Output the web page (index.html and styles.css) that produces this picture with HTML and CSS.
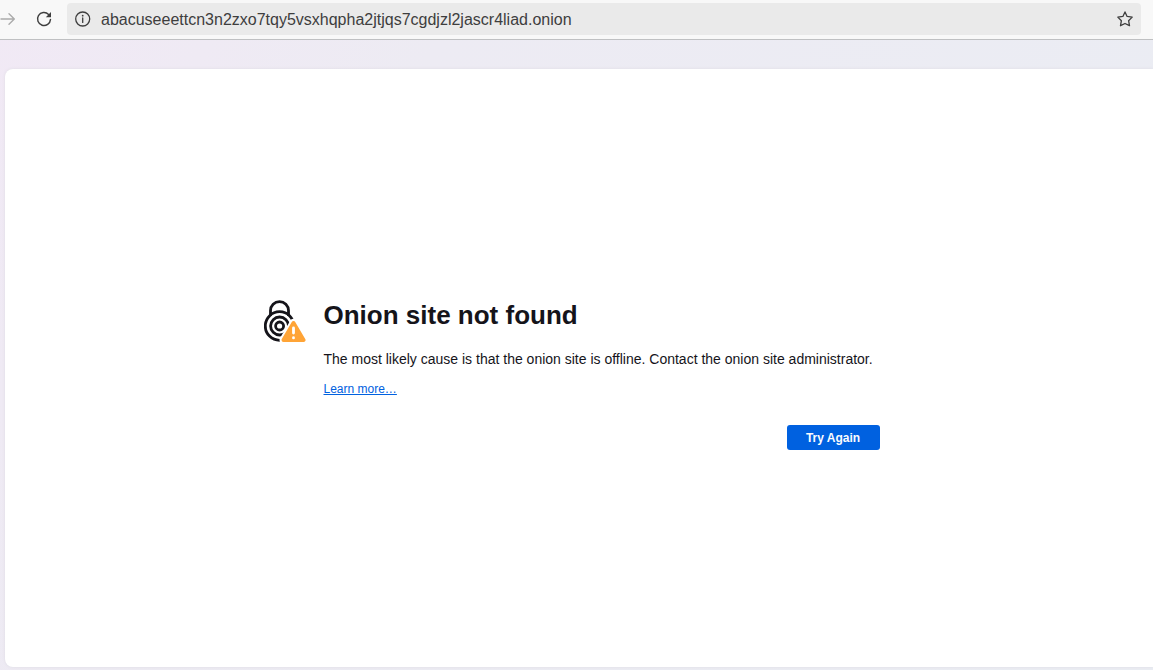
FILE: index.html
```
<!DOCTYPE html>
<html lang="en">

<head>
    <meta charset="UTF-8">
    <meta name="viewport" content="width=device-width, initial-scale=1.0">
    <title>Onion site not found</title>
    <link rel="stylesheet" href="styles.css">
</head>

<body>
    <header class="toolbar">
        <button type="button" class="icon-button forward" aria-label="Forward" disabled>
            <svg width="16" height="16" viewBox="0 0 16 16" fill="none" stroke="currentColor" stroke-width="1.4" stroke-linecap="round" stroke-linejoin="round">
                <path d="M1 8h13M9 2.8L14.3 8 9 13.2"/>
            </svg>
        </button>
        <button type="button" class="icon-button" aria-label="Reload">
            <svg width="16" height="16" viewBox="0 0 16 16" fill="none" stroke="currentColor" stroke-width="1.4" stroke-linecap="round">
                <path d="M12.6 3.4A6.5 6.5 0 1 0 14.5 8.4"/>
                <path d="M15 1v5.2H9.8z" fill="currentColor" stroke="none"/>
            </svg>
        </button>
        <form class="url-bar">
            <button type="button" class="icon-button" aria-label="Site information">
                <svg width="16" height="16" viewBox="0 0 16 16" fill="none" stroke="currentColor" stroke-width="1.3">
                    <circle cx="7.7" cy="8" r="7"/>
                    <path d="M7.7 7v4.4" stroke-linecap="round"/>
                    <circle cx="7.7" cy="4.7" r="0.9" fill="currentColor" stroke="none"/>
                </svg>
            </button>
            <input type="text" class="url-input" aria-label="Address" value="abacuseeettcn3n2zxo7tqy5vsxhqpha2jtjqs7cgdjzl2jascr4liad.onion">
            <button type="button" class="icon-button" aria-label="Bookmark this page">
                <svg width="16" height="16" viewBox="0 0 16 16" fill="none" stroke="currentColor" stroke-width="1.3" stroke-linejoin="round">
                    <path d="M8 0.9l2.1 4.5 5.1 0.7-3.6 3.6 0.9 5L8 12.5l-4.5 2.2 0.9-5L0.8 6.1l5.1-0.7z"/>
                </svg>
            </button>
        </form>
    </header>

    <main class="page">
        <section class="error">
            <svg class="error-icon" width="42" height="43" viewBox="0 0 42 43" fill="none" stroke="#15141a" stroke-width="2.8">
                <path d="M6.5 16V10.6a9 9 0 0 1 18 0V16"/>
                <circle cx="15.6" cy="26" r="14.3"/>
                <circle cx="15.6" cy="26" r="9"/>
                <circle cx="15.6" cy="26" r="4"/>
                <path d="M29.5 23L39.5 40h-20z" fill="#fff" stroke="#fff" stroke-width="8" stroke-linejoin="round"/>
                <path d="M29.5 23L39.5 40h-20z" fill="#ffa436" stroke="#ffa436" stroke-width="4" stroke-linejoin="round"/>
                <path d="M29.5 28v5M29.5 37.7v0.2" stroke="#fff" stroke-linecap="round"/>
            </svg>
            <div class="error-body">
                <h1>Onion site not found</h1>
                <p>The most likely cause is that the onion site is offline. Contact the onion site administrator.</p>
                <a href="#" class="learn-more">Learn more…</a>
                <button type="button" class="try-again">Try Again</button>
            </div>
        </section>
    </main>
</body>

</html>
```
FILE: styles.css
```
* {
    box-sizing: border-box;
}

body {
    display: flex;
    flex-direction: column;
    min-height: 100vh;
    margin: 0;
    font-family: "Liberation Sans", Arial, sans-serif;
    color: #15141a;
    background: linear-gradient(120deg, #f1e9f5, #edebf3 30%, #eaedf3);
    overflow-x: hidden;
}

.toolbar {
    display: flex;
    align-items: center;
    gap: 20px;
    height: 40px;
    padding: 0 12px 2px 0;
    background-color: #f8f8f8;
    border-bottom: 1px solid #bfc0c2;
}

.icon-button {
    display: flex;
    padding: 0;
    border: none;
    background: none;
    color: #3e3e3e;
}

.forward {
    color: #ababab;
}

.url-bar {
    display: flex;
    flex: 1;
    align-items: center;
    gap: 10px;
    height: 32px;
    margin-left: -5px;
    padding: 0 8px;
    background-color: #eaeaea;
    border-radius: 4px;
}

.url-input {
    flex: 1;
    padding: 2px 0 0;
    border: none;
    outline: none;
    background: none;
    font-family: inherit;
    font-size: 16px;
    color: #3e3e3e;
}

.page {
    display: flex;
    flex: 1;
    align-items: center;
    justify-content: center;
    margin: 29px 0 3px 5px;
    padding: 14px 12px 0 0;
    background-color: #fff;
    border-radius: 8px 0 0 8px;
    box-shadow: 0 0 3px #dddbe3;
}

.error {
    display: flex;
    gap: 18px;
    width: 100%;
    max-width: 619px;
}

.error-icon {
    flex-shrink: 0;
}

.error-body {
    display: flex;
    flex: 1;
    flex-direction: column;
    align-items: flex-start;
}

h1 {
    margin: 0 0 20px;
    font-size: 26px;
    line-height: 30px;
}

p {
    margin: 0 0 14px;
    font-size: 14px;
    line-height: 18px;
}

.learn-more {
    font-size: 12px;
    line-height: 14px;
    color: #0061e0;
}

.try-again {
    align-self: flex-end;
    min-width: 93px;
    height: 25px;
    margin: 29px 3px 0 0;
    border: none;
    border-radius: 3px;
    background-color: #0061e0;
    font-family: inherit;
    font-size: 12px;
    font-weight: bold;
    color: #fbfbfe;
}
```
